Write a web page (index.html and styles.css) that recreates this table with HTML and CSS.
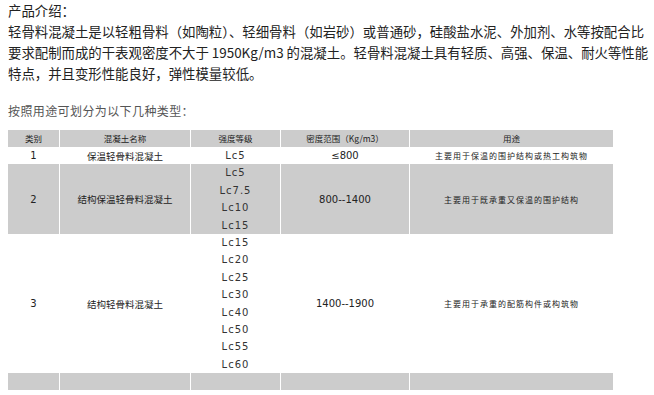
FILE: index.html
```html
<!DOCTYPE html>
<html lang="zh">
<head>
<meta charset="utf-8">
<title>产品介绍</title>
<link rel="stylesheet" href="styles.css">
</head>
<body>
<div class="intro">
  <p class="title">产品介绍：</p>
  <p class="desc">轻骨料混凝土是以轻粗骨料（如陶粒）、轻细骨料（如岩砂）或普通砂，硅酸盐水泥、外加剂、水等按配合比<br>要求配制而成的干表观密度不大于 1950Kg/m3 的混凝土。轻骨料混凝土具有轻质、高强、保温、耐火等性能<br>特点，并且变形性能良好，弹性模量较低。</p>
</div>
<p class="lead">按照用途可划分为以下几种类型：</p>
<table class="types">
  <colgroup>
    <col class="c1"><col class="c2"><col class="c3"><col class="c4"><col class="c5">
  </colgroup>
  <tr class="head">
    <td class="small">类别</td>
    <td class="small">混凝土名称</td>
    <td class="small">强度等级</td>
    <td class="small">密度范围（Kg/m3）</td>
    <td class="small">用途</td>
  </tr>
  <tr class="plain">
    <td class="num">1</td>
    <td class="name">保温轻骨料混凝土</td>
    <td><span class="lc">Lc5</span></td>
    <td class="num">≤800</td>
    <td class="use">主要用于保温的围护结构或热工构筑物</td>
  </tr>
  <tr class="shade">
    <td class="num">2</td>
    <td class="name">结构保温轻骨料混凝土</td>
    <td><span class="lc">Lc5</span><span class="lc">Lc7.5</span><span class="lc">Lc10</span><span class="lc">Lc15</span></td>
    <td class="num">800--1400</td>
    <td class="use">主要用于既承重又保温的围护结构</td>
  </tr>
  <tr class="plain">
    <td class="num">3</td>
    <td class="name">结构轻骨料混凝土</td>
    <td><span class="lc">Lc15</span><span class="lc">Lc20</span><span class="lc">Lc25</span><span class="lc">Lc30</span><span class="lc">Lc40</span><span class="lc">Lc50</span><span class="lc">Lc55</span><span class="lc">Lc60</span></td>
    <td class="num">1400--1900</td>
    <td class="use">主要用于承重的配筋构件或构筑物</td>
  </tr>
  <tr class="shade empty">
    <td></td><td></td><td></td><td></td><td></td>
  </tr>
</table>
</body>
</html>
```

FILE: styles.css
```css
html {
  overflow: hidden;
}
body {
  margin: 0 0 0 8px;
  color: #333;
  font-family: "Noto Sans CJK SC", "Noto Sans", sans-serif;
  background: #fff;
}
p {
  margin: 0;
}
.intro {
  font-size: 13.4px;
  line-height: 21px;
  white-space: nowrap;
  color: #222;
}
.lead {
  margin-top: 16px;
  font-size: 12px;
  line-height: 21px;
  color: #555;
  letter-spacing: 0.4px;
}
.types {
  margin-top: 9px;
  margin-left: -1px;
  border-collapse: separate;
  border-spacing: 1px 0;
  table-layout: fixed;
  width: 607px;
}
.c1 { width: 51px; }
.c2 { width: 130px; }
.c3 { width: 89px; }
.c4 { width: 128px; }
.c5 { width: 203px; }
.types td {
  padding: 0;
  text-align: center;
  vertical-align: middle;
  color: #222;
}
.head td,
.shade td {
  background: #ccc;
}
.head td {
  height: 17px;
}
.empty td {
  height: 17px;
}
.small {
  font-size: 8.5px;
  line-height: 17px;
}
.num {
  font-family: "DejaVu Sans", sans-serif;
  font-size: 10px;
}
.name {
  font-size: 9.5px;
}
.use {
  font-size: 8px;
  letter-spacing: 1px;
}
.lc {
  display: block;
  font-family: "DejaVu Sans", sans-serif;
  font-size: 10px;
  line-height: 17.4px;
  letter-spacing: 1px;
  color: #333;
}
```
